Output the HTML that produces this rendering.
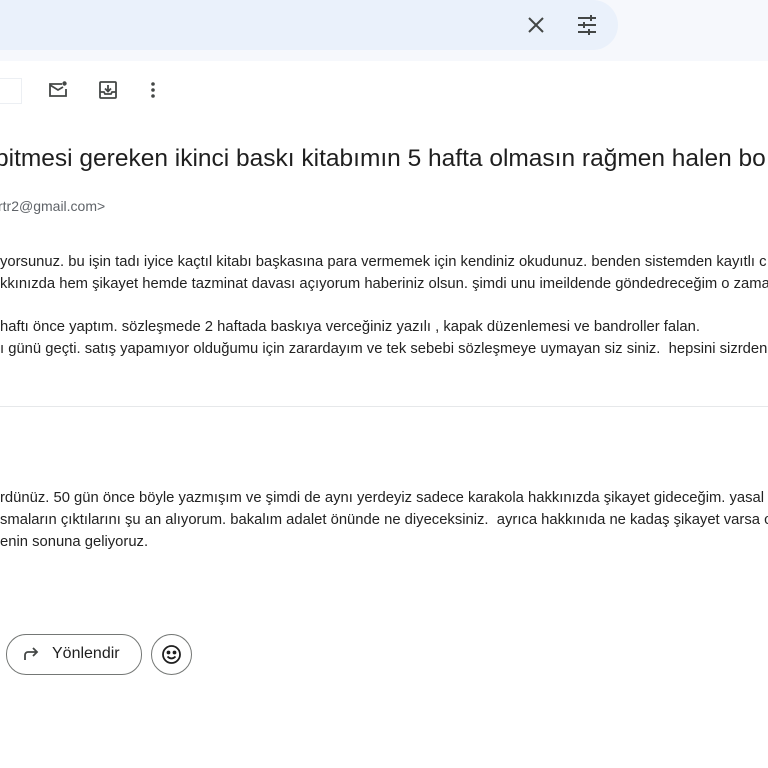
<!DOCTYPE html>
<html><head><meta charset="utf-8"><style>
html,body{margin:0;padding:0;width:768px;height:768px;overflow:hidden;background:#fff;font-family:"Liberation Sans",Arial,sans-serif;color:#202124}
.top{position:absolute;left:0;top:0;width:768px;height:61px;background:#f6f8fc}
.search{position:absolute;left:-40px;top:0;width:658px;height:50px;background:#eaf1fb;border-radius:0 25px 25px 0}
.abs{position:absolute}
.line{position:absolute;left:0;white-space:nowrap;font-size:14.8px;color:#222;line-height:18px}
.subj{position:absolute;left:-5px;top:145px;white-space:nowrap;font-size:24.5px;color:#1f1f1f}
</style></head><body>
<div class="top"></div>
<div class="search"></div>
<svg class="abs" style="left:526px;top:15px" width="20" height="20" viewBox="0 0 20 20"><path d="M3 3L17 17M17 3L3 17" stroke="#444746" stroke-width="2"/></svg>
<svg class="abs" style="left:576px;top:14px" width="22" height="22" viewBox="0 0 22 22" fill="#444746"><rect x="2" y="3" width="18" height="2"/><rect x="14" y="1" width="2" height="6"/><rect x="2" y="10" width="18" height="2"/><rect x="7" y="8" width="2" height="6"/><rect x="2" y="17" width="18" height="2"/><rect x="12" y="15" width="2" height="6"/></svg>

<div class="abs" style="left:-2px;top:78px;width:23px;height:24px;border:1px solid #eceff3;border-left:none"></div>
<svg class="abs" style="left:48px;top:80px" width="20" height="20" viewBox="0 0 20 20" fill="none" stroke="#444746" stroke-width="1.8"><path d="M14 4H2v12h16V9"/><path d="M2 5l8 5 5-3"/><circle cx="16.5" cy="3.5" r="2.2" fill="#444746" stroke="none"/></svg>
<svg class="abs" style="left:98px;top:80px" width="20" height="20" viewBox="0 0 20 20" fill="none" stroke="#444746" stroke-width="1.8"><rect x="2" y="2" width="16" height="16" rx="1"/><path d="M10 5v6M7 8.5l3 3 3-3M2 12h4l1 2h6l1-2h4"/></svg>
<svg class="abs" style="left:150px;top:81px" width="6" height="18" viewBox="0 0 6 18" fill="#444746"><circle cx="3" cy="3" r="1.8"/><circle cx="3" cy="9" r="1.8"/><circle cx="3" cy="15" r="1.8"/></svg>

<div class="subj">bitmesi gereken ikinci baskı kitabımın 5 hafta olmasın rağmen halen bo</div>
<div class="abs" style="left:-2px;top:198px;font-size:14px;color:#5f6368;white-space:nowrap">rtr2@gmail.com&gt;</div>

<div class="line" style="top:253px">yorsunuz. bu işin tadı iyice kaçtıl kitabı başkasına para vermemek için kendiniz okudunuz. benden sistemden kayıtlı c</div>
<div class="line" style="top:275px">kkınızda hem şikayet hemde tazminat davası açıyorum haberiniz olsun. şimdi unu imeildende göndedreceğim o zama</div>
<div class="line" style="top:318px">haftı önce yaptım. sözleşmede 2 haftada baskıya verceğiniz yazılı , kapak düzenlemesi ve bandroller falan.</div>
<div class="line" style="top:340px">ı günü geçti. satış yapamıyor olduğumu için zarardayım ve tek sebebi sözleşmeye uymayan siz siniz.&nbsp; hepsini sizrden</div>
<div class="abs" style="left:0;top:406px;width:768px;height:1px;background:#e6e8ea"></div>
<div class="line" style="top:489px">rdünüz. 50 gün önce böyle yazmışım ve şimdi de aynı yerdeyiz sadece karakola hakkınızda şikayet gideceğim. yasal</div>
<div class="line" style="top:511px">smaların çıktılarını şu an alıyorum. bakalım adalet önünde ne diyeceksiniz.&nbsp; ayrıca hakkınıda ne kadaş şikayet varsa c</div>
<div class="line" style="top:533px">enin sonuna geliyoruz.</div>

<div class="abs" style="left:6px;top:634px;width:134px;height:39px;border:1px solid #747775;border-radius:20px"></div>
<svg class="abs" style="left:22px;top:645px" width="18" height="18" viewBox="0 0 18 18" fill="none" stroke="#444746" stroke-width="1.8"><path d="M3 15V10a3 3 0 0 1 3-3h9M11 3l4 4-4 4"/></svg>
<div class="abs" style="left:52px;top:645px;font-size:16px;color:#1f1f1f">Yönlendir</div>
<div class="abs" style="left:151px;top:634px;width:39px;height:39px;border:1px solid #747775;border-radius:50%"></div>
<svg class="abs" style="left:161px;top:644px" width="21" height="21" viewBox="0 0 21 21" fill="none" stroke="#1f1f1f" stroke-width="1.8"><circle cx="10.5" cy="10.5" r="8.5"/><circle cx="7.5" cy="8.5" r="1" fill="#1f1f1f"/><circle cx="13.5" cy="8.5" r="1" fill="#1f1f1f"/><path d="M6.5 12.5q4 4 8 0"/></svg>
</body></html>
